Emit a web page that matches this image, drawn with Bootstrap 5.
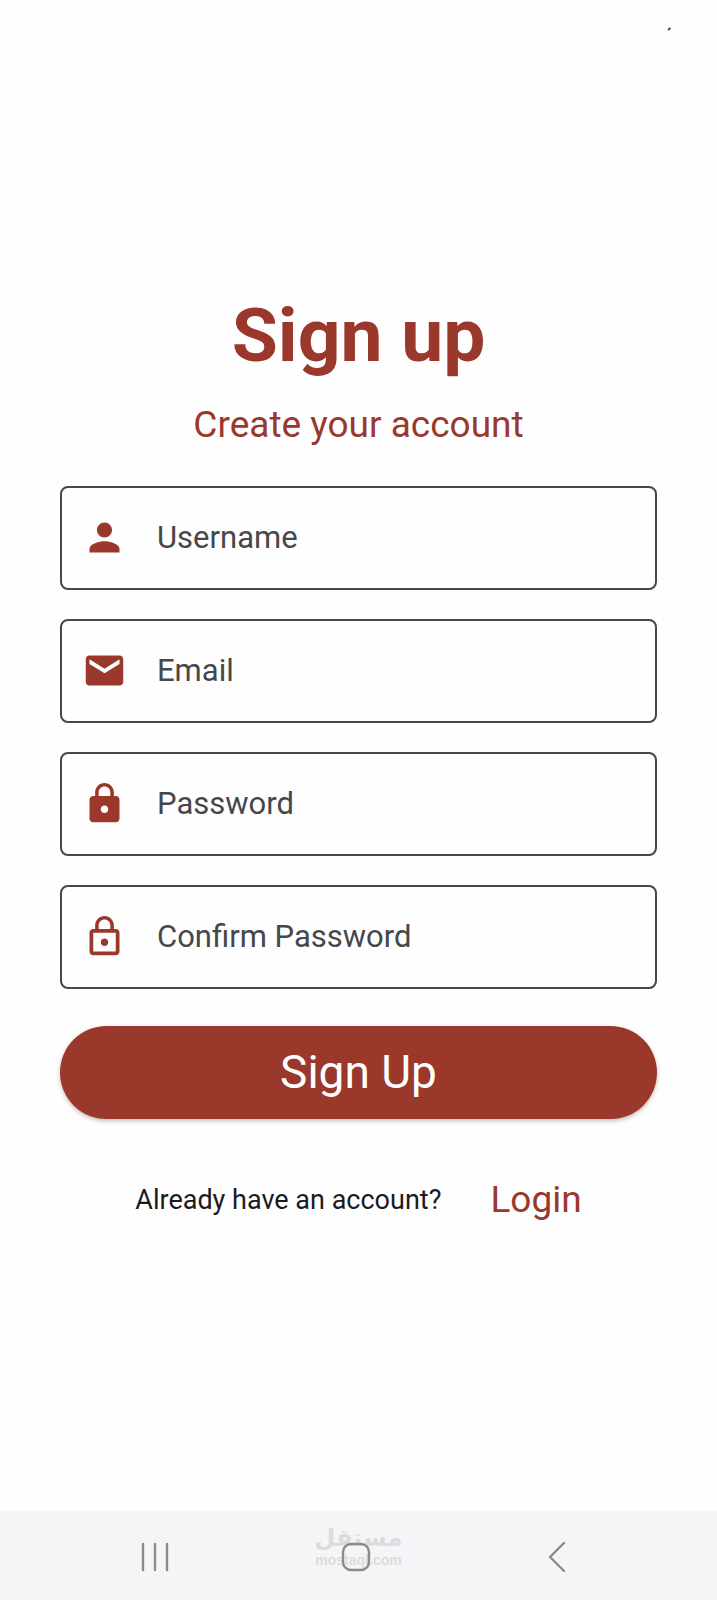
<!DOCTYPE html>
<html lang="en">
<head>
<meta charset="utf-8">
<meta name="viewport" content="width=device-width, initial-scale=1">
<title>Sign up</title>
<link href="https://cdn.jsdelivr.net/npm/bootstrap@5.3.0/dist/css/bootstrap.min.css" rel="stylesheet">
<style>
  :root { --brand: #9a382c; --outline: #46474b; }
  body { font-family: Roboto, "Liberation Sans", sans-serif; background: #fefefe; color: #1b1b1f; }
  .status-strip { height: 48px; padding: 26px 45px 0 0; }
  .signup-main { padding: 0 60px 47px; }
  .signup-title { font-size: 75px; line-height: 88px; color: var(--brand); margin-bottom: 24px; }
  .signup-lead { font-size: 37px; line-height: 44px; color: var(--brand); margin-bottom: 39px; }
  .field-stack { gap: 29px; }
  .field-box { height: 104px; border: 2px solid var(--outline); border-radius: 8px; background: #fefefe; }
  .field-box:focus-within { border-color: var(--brand); }
  .field-icon { width: 84px; color: var(--brand); }
  .field-icon svg { width: 45px; height: 45px; fill: currentColor; }
  .field-box .form-control { font-size: 31px; line-height: 40px; padding: 0 12px 0 11px; color: var(--outline); }
  .field-box .form-control::placeholder { color: var(--outline); opacity: 1; }
  .btn-brand { --bs-btn-color: #fff; --bs-btn-bg: var(--brand); --bs-btn-hover-color: #fff; --bs-btn-hover-bg: #842e25; --bs-btn-active-color: #fff; --bs-btn-active-bg: #842e25;
    height: 93px; margin-top: 37px; padding: 0; border: 0; font-size: 46px; line-height: 56px; box-shadow: 0 2px 4px rgba(80, 30, 25, .3); }
  .login-row { margin-top: 59px; gap: 49px; }
  .login-row span { font-size: 27px; line-height: 44px; }
  .login-row a { font-size: 37px; line-height: 44px; color: var(--brand); }
  .system-bar { height: 89px; padding: 3px 60px 0 54px; background: #f5f5f8; }
  .system-bar button { color: #8b8b8e; }
  .system-bar svg { fill: none; stroke: currentColor; stroke-width: 2.4; stroke-linecap: round; stroke-linejoin: round; }
  .watermark { top: 13px; left: 0; right: 0; color: #dcdcde; pointer-events: none; }
  .watermark-ar { font: 700 24px/28px "DejaVu Sans", sans-serif; }
  .watermark-en { font: 700 14px/16px "Liberation Sans", sans-serif; }
</style>
</head>
<body class="d-flex flex-column min-vh-100">
  <header class="status-strip d-flex justify-content-end align-items-start">
    <svg width="5" height="5" viewBox="0 0 5 5" aria-hidden="true"><path d="M1 4 3.500 2" stroke="#444" stroke-width="1.800"/></svg>
  </header>

  <main class="signup-main flex-grow-1 d-flex flex-column justify-content-center">
    <h1 class="signup-title fw-bold text-center">Sign up</h1>
    <p class="signup-lead text-center">Create your account</p>

    <form>
      <div class="field-stack d-flex flex-column">
        <div class="field-box d-flex align-items-center">
          <label class="field-icon d-flex justify-content-center flex-shrink-0" for="username">
            <svg viewBox="0 0 24 24" role="img" aria-label="Username"><path d="M12 12c2.210 0 4-1.790 4-4s-1.790-4-4-4-4 1.790-4 4 1.790 4 4 4zm0 2c-2.670 0-8 1.340-8 4v2h16v-2c0-2.660-5.330-4-8-4z"/></svg>
          </label>
          <input class="form-control border-0 shadow-none bg-transparent" type="text" id="username" placeholder="Username">
        </div>
        <div class="field-box d-flex align-items-center">
          <label class="field-icon d-flex justify-content-center flex-shrink-0" for="email">
            <svg viewBox="0 0 24 24" role="img" aria-label="Email"><path d="M20 4H4c-1.100 0-1.990.9-1.990 2L2 18c0 1.100.9 2 2 2h16c1.100 0 2-.9 2-2V6c0-1.100-.9-2-2-2zm0 4.500-8 5-8-5V6l8 5 8-5v2.500z"/></svg>
          </label>
          <input class="form-control border-0 shadow-none bg-transparent" type="email" id="email" placeholder="Email">
        </div>
        <div class="field-box d-flex align-items-center">
          <label class="field-icon d-flex justify-content-center flex-shrink-0" for="password">
            <svg viewBox="0 0 24 24" role="img" aria-label="Password"><path d="M18 8h-1V6c0-2.760-2.240-5-5-5S7 3.240 7 6v2H6c-1.100 0-2 .9-2 2v10c0 1.100.9 2 2 2h12c1.100 0 2-.9 2-2V10c0-1.100-.9-2-2-2zm-6 9c-1.100 0-2-.9-2-2s.9-2 2-2 2 .9 2 2-.9 2-2 2zm3.100-9H8.900V6c0-1.710 1.390-3.100 3.100-3.100s3.100 1.390 3.100 3.100v2z"/></svg>
          </label>
          <input class="form-control border-0 shadow-none bg-transparent" type="password" id="password" placeholder="Password">
        </div>
        <div class="field-box d-flex align-items-center">
          <label class="field-icon d-flex justify-content-center flex-shrink-0" for="confirm">
            <svg viewBox="0 0 24 24" role="img" aria-label="Confirm Password"><path d="M12 17c1.100 0 2-.9 2-2s-.9-2-2-2-2 .9-2 2 .9 2 2 2zm6-9h-1V6c0-2.760-2.240-5-5-5S7 3.240 7 6v2H6c-1.100 0-2 .9-2 2v10c0 1.100.9 2 2 2h12c1.100 0 2-.9 2-2V10c0-1.100-.9-2-2-2zM8.900 6c0-1.710 1.390-3.100 3.100-3.100s3.100 1.390 3.100 3.100v2H8.900V6zM18 20H6V10h12v10z"/></svg>
          </label>
          <input class="form-control border-0 shadow-none bg-transparent" type="password" id="confirm" placeholder="Confirm Password">
        </div>
      </div>
      <button class="btn btn-brand rounded-pill w-100" type="submit">Sign Up</button>
    </form>

    <div class="login-row d-flex justify-content-center align-items-center">
      <span>Already have an account?</span>
      <a class="text-decoration-none" href="#login">Login</a>
    </div>
  </main>

  <footer class="system-bar position-relative d-flex align-items-center">
    <div class="watermark position-absolute text-center">
      <div class="watermark-ar" lang="ar" dir="rtl">مستقل</div>
      <div class="watermark-en">mostaql.com</div>
    </div>
    <button class="btn border-0 p-0 flex-fill position-relative" type="button" aria-label="Recent apps">
      <svg width="30" height="30" viewBox="0 0 30 30"><path d="M3 2v26M15 2v26M27 2v26"/></svg>
    </button>
    <button class="btn border-0 p-0 flex-fill position-relative" type="button" aria-label="Home">
      <svg width="30" height="30" viewBox="0 0 30 30"><rect x="2" y="2" width="26" height="26" rx="8"/></svg>
    </button>
    <button class="btn border-0 p-0 flex-fill position-relative" type="button" aria-label="Back">
      <svg width="30" height="30" viewBox="0 0 30 30"><path d="M22 1 8 15l14 14"/></svg>
    </button>
  </footer>
<script src="https://cdn.jsdelivr.net/npm/bootstrap@5.3.0/dist/js/bootstrap.bundle.min.js"></script>
</body>
</html>
